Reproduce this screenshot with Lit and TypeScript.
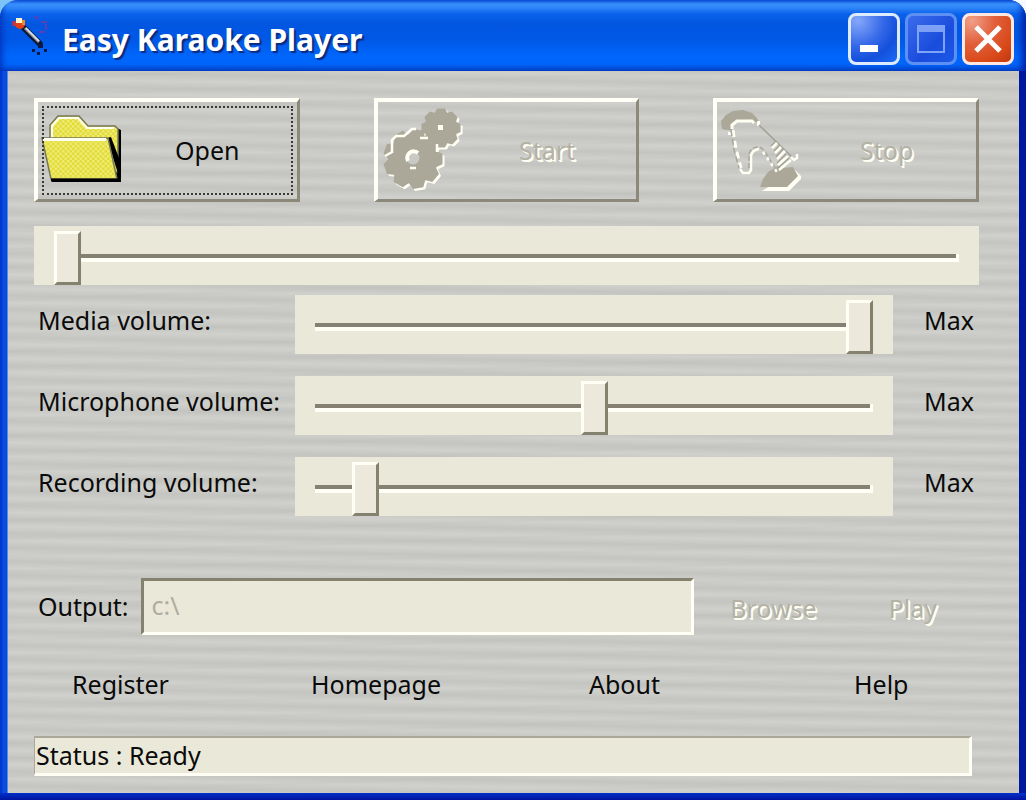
import { LitElement, html, css, svg } from "lit";
import { customElement, state } from "lit/decorators.js";

const wandIcon = svg`
  <svg class="wand" viewBox="0 0 40 40" aria-hidden="true">
    <path d="M11 12 L29 30" stroke="#0c1430" stroke-width="6"/>
    <path d="M13 13 L27 27" stroke="#8a94a0" stroke-width="3"/>
    <path d="M14 13 L27 26" stroke="#e6ebf0" stroke-width="1.500"/>
    <path d="M0 6h6v5h-6z" fill="#a83a5a"/>
    <circle cx="8" cy="9" r="5" fill="#e2401a"/>
    <path d="M4 3h6v5h-6z" fill="#fff6cc"/>
    <path d="M10 5h3v5h-3z" fill="#f08a30"/>
    <path d="M23 1h3v3h-3zM29 6h6v2h-6zM33 9h2v6h-2zM27 16h6v2h-6z" fill="#5a40b0"/>
    <path d="M20 34h3v3h-3zM25 37h3v3h-3zM32 34h3v3h-3zM26 29h5v4h-5z" fill="#0a1a44"/>
  </svg>`;

const folderIcon = svg`
  <svg class="icon" viewBox="0 0 80 80" aria-hidden="true">
    <defs>
      <pattern id="dither" width="5" height="5" patternUnits="userSpaceOnUse">
        <rect width="5" height="5" fill="#e2dc38"/>
        <path d="M0 0h2.5v2.5h-2.5zM2.5 2.5h2.5v2.5h-2.5z" fill="#efeb72"/>
      </pattern>
    </defs>
    <path d="M73 17 L79 20 V72 H10 V68 H72z" fill="#000"/>
    <path d="M8 28 V15 L16 6 H37 L46 16 H73 L76 19 V62 H20z" fill="url(#dither)" stroke="#77775a" stroke-width="1.5"/>
    <path d="M10 28 V16 L17 8 H36 L45 18 H72" fill="none" stroke="#fffff0" stroke-width="2"/>
    <path d="M65 28 L77 67 V48 L69 27z" fill="#000"/>
    <path d="M0 28 H66 L75 69 H9z" fill="url(#dither)" stroke="#77775a" stroke-width="1.5"/>
    <path d="M1 29.5 H64" stroke="#fffff0" stroke-width="3"/>
    <path d="M9 70 H78" stroke="#000" stroke-width="3"/>
  </svg>`;

const gear = (cx: number, cy: number, r: number, teeth: number) => {
  const points: string[] = [];
  for (let i = 0; i < teeth; i++) {
    const a = (i * 2 * Math.PI) / teeth;
    const w = Math.PI / teeth;
    for (const [o, k] of [[-0.95, 0.83], [-0.5, 1], [0.5, 1], [0.95, 0.83]]) {
      points.push(
        `${(cx + Math.cos(a + o * w) * r * k).toFixed(1)},${(cy + Math.sin(a + o * w) * r * k).toFixed(1)}`,
      );
    }
  }
  return points.join(" ");
};

const gearsIcon = svg`
  <svg class="icon" viewBox="0 0 80 80" aria-hidden="true">
    <g fill="#fffff4">
      <polygon points=${gear(33, 51, 30, 9)}/>
      <polygon points=${gear(61, 20, 20, 8)}/>
    </g>
    <g fill="#aca899">
      <polygon points=${gear(31, 49, 30, 9)}/>
      <polygon points=${gear(59, 18, 20, 8)}/>
    </g>
    <path d="M3 46 L10 42 V30 L14 26 H22 L30 19 H34" fill="none" stroke="#fffff4" stroke-width="2.500"/>
    <path d="M38 28h8M55 34v8" stroke="#fffff4" stroke-width="2.500"/>
    <circle cx="31" cy="48" r="6.500" fill="#c9c9c5"/>
    <path d="M26 51 a6.500 6.500 0 0 1 10 -8" fill="none" stroke="#fffff4" stroke-width="4"/>
    <path d="M28 58h6" stroke="#fffff4" stroke-width="2.500"/>
    <rect x="56" y="15" width="5" height="5" fill="#fffff4"/>
  </svg>`;

const handIcon = svg`
  <svg class="icon" viewBox="0 0 80 80" aria-hidden="true">
    <path d="M41 81 H68 L80 69 V66 L74 60z" fill="#fffff4"/>
    <path d="M39 77 L42 69 L47 62 L57 56 L62 58 L72 57 L77 66 L66 77z" fill="#aca899"/>
    <path d="M1 19 L0 11 L5 5 L12 1 L22 0 L31 3 L36 8 L38 12 H15 L11 15 V20 L5 20z" fill="#aca899"/>
    <path d="M11 19 V15 L16 11 H31 L33 13" fill="none" stroke="#fffff4" stroke-width="3"/>
    <path d="M36 11h3v5h-3zM7 22h3v3h-3z" fill="#fffff4"/>
    <path d="M12 20 L15 39 L20 58" fill="none" stroke="#fffff4" stroke-width="3" stroke-dasharray="7 4"/>
    <path d="M10 20 L13 40 L18 58" fill="none" stroke="#aaa79a" stroke-width="1.500" stroke-dasharray="6 3"/>
    <path d="M19 59 L22 63 H28 L30 60 V46 Q31 40 38 39" fill="none" stroke="#fffff4" stroke-width="2.500"/>
    <path d="M28 58 V44 Q30 37 37 37 Q41 37 44 42 L55 59" fill="none" stroke="#aaa79a" stroke-width="1.500" stroke-dasharray="5 2"/>
    <path d="M42 42 L56 62" fill="none" stroke="#fffff4" stroke-width="2.500" stroke-dasharray="3 4"/>
    <path d="M38 15 L72 48" fill="none" stroke="#a4a194" stroke-width="1.500"/>
    <path d="M70 47 L73 50 L76 48 V44" fill="none" stroke="#fffff4" stroke-width="2.500"/>
    <path d="M51 38 L56 33 M54 43 L60 37 M56 49 L64 41 M57 55 L67 46 M58 60 L70 50" stroke="#fffff4" stroke-width="2.500"/>
    <path d="M50 36 L54 32 M53 41 L58 36 M55 47 L62 39 M56 53 L65 44 M57 58 L68 48" stroke="#a4a194" stroke-width="1.200"/>
  </svg>`;

@customElement("app-root")
export class AppRoot extends LitElement {
  @state() private volumes = [
    { id: "media", label: "Media volume:", value: 100 },
    { id: "mic", label: "Microphone volume:", value: 50 },
    { id: "rec", label: "Recording volume:", value: 7 },
  ];

  static styles = css`
    :host {
      display: block;
      min-height: 100vh;
      background: linear-gradient(90deg, #7cc4f8 50%, #f4faff 50%);
      font-family: "Noto Sans", Tahoma, sans-serif;
      font-size: 25px;
      line-height: 34px;
      color: #0a0a0a;
    }
    * { box-sizing: border-box; }
    button, input { font: inherit; color: inherit; }
    .window {
      display: flex;
      flex-direction: column;
      min-height: 100vh;
      border-radius: 18px 18px 0 0;
      overflow: hidden;
      background:
        linear-gradient(180deg, #0030c8, #0014a0) 0 100% / 100% 7px no-repeat,
        linear-gradient(90deg, #0030c4 0, #0a50e4 4px, #0a46dc 7px, #a8c8f8 8px, #0028b8 50%, #0018a0 100%);
    }
    .titlebar {
      display: flex;
      align-items: center;
      gap: 6px;
      height: 71px;
      padding: 6px 12px 0 12px;
      background: linear-gradient(180deg, #0a54dc 0, #3a90fc 4px, #2c84f8 8px, #0a62ec 14px, #0256e0 24px, #0058e6 40px, #0066fc 56px, #0064fa 64px, #0048d0 70px, #003cc0 71px);
      box-shadow: inset 6px 0 6px -4px #0030b8, inset -8px 0 7px -4px #0022a4;
    }
    .wand { width: 40px; height: 40px; margin-bottom: 8px; flex: none; }
    h1 {
      flex: 1;
      margin: 0;
      padding: 2px 0 0 4px;
      font-size: 30px;
      line-height: 40px;
      font-weight: 700;
      color: #fff;
      text-shadow: 2px 2px 1px #0a2a80;
    }
    .caption { display: flex; gap: 5px; }
    .caption button {
      width: 52px;
      height: 52px;
      padding: 0;
      border: 3px solid #dcebff;
      border-radius: 8px;
      background: radial-gradient(circle at 15% 10%, #86a8fa 0, #3468e8 45%, #1450dc 70%, #1a6cf8 100%);
    }
    .caption .max { border-color: #5c90f4; background: linear-gradient(135deg, #3c6cec, #1a4cdc 60%, #1c58e8); }
    .caption .close { border-color: #ffe8e0; background: radial-gradient(circle at 15% 10%, #f0a088 0, #e2603c 40%, #d84818 75%, #c03810 100%); }
    .caption svg { display: block; width: 46px; height: 46px; }
    .body {
      flex: 1;
      margin: 0 7px 7px 8px;
      padding: 27px 40px 17px 26px;
      background:
        repeating-linear-gradient(178deg, #0000 0 5px, #b4b6b226 8px, #0000 11px 17px),
        repeating-linear-gradient(181deg, #cbccc8 0, #c4c5c1 4px, #c9cac6 7px, #d0d0cc 11px, #cbccc8 14px);
    }
    .actions {
      display: grid;
      grid-template-columns: repeat(3, 1fr);
      gap: 74px;
    }
    .action {
      display: grid;
      grid-template-columns: 80px 1fr;
      align-items: center;
      height: 104px;
      padding: 0 4px 2px;
      border: solid;
      border-color: #fffff6 #8c897a #8c897a #fffff6;
      border-width: 4px 3px 3px 4px;
      background: none;
      outline: none;
    }
    .action.focused { position: relative; }
    .action.focused::after {
      content: "";
      position: absolute;
      inset: 4px;
      border: 2px dotted #3a3a34;
    }
    .icon { width: 80px; height: 80px; overflow: visible; }
    .etched, .action:disabled {
      color: #b4b1a5;
      text-shadow: 1px 1px 0 #fffff4, 2px 2px 0 #fffff4;
    }
    .panel {
      height: 59px;
      padding: 5px 20px 0;
      background: #eae8d8;
    }
    .position { margin: 24px 0 10px; }
    input[type="range"] {
      -webkit-appearance: none;
      appearance: none;
      display: block;
      width: 100%;
      height: 54px;
      margin: 0;
      background: none;
      outline: none;
    }
    input[type="range"]::-webkit-slider-runnable-track {
      height: 54px;
      background:
        linear-gradient(#fffff6, #fffff6) 100% 23px / 3px 7px no-repeat,
        linear-gradient(#848173 0 4px, #fffff6 4px 8px) 0 23px / 100% 8px no-repeat;
    }
    input[type="range"]::-webkit-slider-thumb {
      -webkit-appearance: none;
      width: 27px;
      height: 54px;
      border: solid;
      border-width: 3px;
      border-color: #fffff6 #84816f #84816f #fffff6;
      background: #ece9dc;
    }
    .volumes { display: grid; gap: 22px; }
    .volume {
      display: grid;
      grid-template-columns: 257px 1fr 86px;
      padding-left: 4px;
      line-height: 50px;
    }
    .max-label { padding-left: 31px; }
    .output {
      display: flex;
      align-items: center;
      gap: 12px;
      margin-top: 62px;
      padding: 0 42px 0 4px;
    }
    .output label { padding-bottom: 2px; }
    .output input {
      flex: 1;
      min-width: 0;
      height: 57px;
      padding: 0 8px 4px;
      border: solid;
      border-width: 3px;
      border-color: #84816f #fffff6 #fffff6 #84816f;
      border-radius: 0;
      background: #eae8d8;
      color: #b0ad9f;
    }
    .plain { padding: 0; border: 0; background: none; }
    .browse { margin: 2px 60px 0 24px; }
    .play { margin-top: 2px; }
    .links {
      display: grid;
      grid-template-columns: 239fr 278fr 265fr 125fr;
      margin: 32px 0 35px;
      padding-left: 38px;
    }
    .links a { justify-self: start; color: inherit; text-decoration: none; }
    .status {
      margin-right: 7px;
      height: 40px;
      padding: 0 1px;
      border: solid;
      border-width: 2px 3px 3px 1px;
      border-color: #aca899 #fffff6 #fffff6 #aca899;
      background: #eae8d8;
    }
  `;

  render() {
    return html`
      <div class="window">
        <header class="titlebar">
          ${wandIcon}
          <h1>Easy Karaoke Player</h1>
          <div class="caption">
            <button aria-label="Minimize">
              <svg viewBox="0 0 46 46"><path d="M9 29h18v7h-18z" fill="#fff"/></svg>
            </button>
            <button class="max" aria-label="Maximize" disabled>
              <svg viewBox="0 0 46 46">
                <path d="M10 10h26v26h-26z" fill="none" stroke="#7ca4f8" stroke-width="2"/>
                <path d="M10 10h26v6h-26z" fill="#7ca0f6"/>
              </svg>
            </button>
            <button class="close" aria-label="Close">
              <svg viewBox="0 0 46 46">
                <path d="M11 11 L35 35 M35 11 L11 35" stroke="#fff" stroke-width="5"/>
              </svg>
            </button>
          </div>
        </header>
        <main class="body">
          <div class="actions">
            <button class="action focused">${folderIcon}<span>Open</span></button>
            <button class="action" disabled>${gearsIcon}<span>Start</span></button>
            <button class="action" disabled>${handIcon}<span>Stop</span></button>
          </div>
          <div class="panel position">
            <input type="range" min="0" max="100" .value=${"0"} aria-label="Position" />
          </div>
          <div class="volumes">
            ${this.volumes.map(
              (v) => html`
                <div class="volume">
                  <label for=${v.id}>${v.label}</label>
                  <div class="panel">
                    <input id=${v.id} type="range" min="0" max="100" .value=${String(v.value)} />
                  </div>
                  <span class="max-label">Max</span>
                </div>
              `,
            )}
          </div>
          <div class="output">
            <label for="output">Output:</label>
            <input id="output" type="text" .value=${"c:\\"} disabled />
            <button class="plain etched browse" disabled>Browse</button>
            <button class="plain etched play" disabled>Play</button>
          </div>
          <nav class="links">
            <a href="#register">Register</a>
            <a href="#homepage">Homepage</a>
            <a href="#about">About</a>
            <a href="#help">Help</a>
          </nav>
          <div class="status" role="status">Status : Ready</div>
        </main>
      </div>
    `;
  }
}
